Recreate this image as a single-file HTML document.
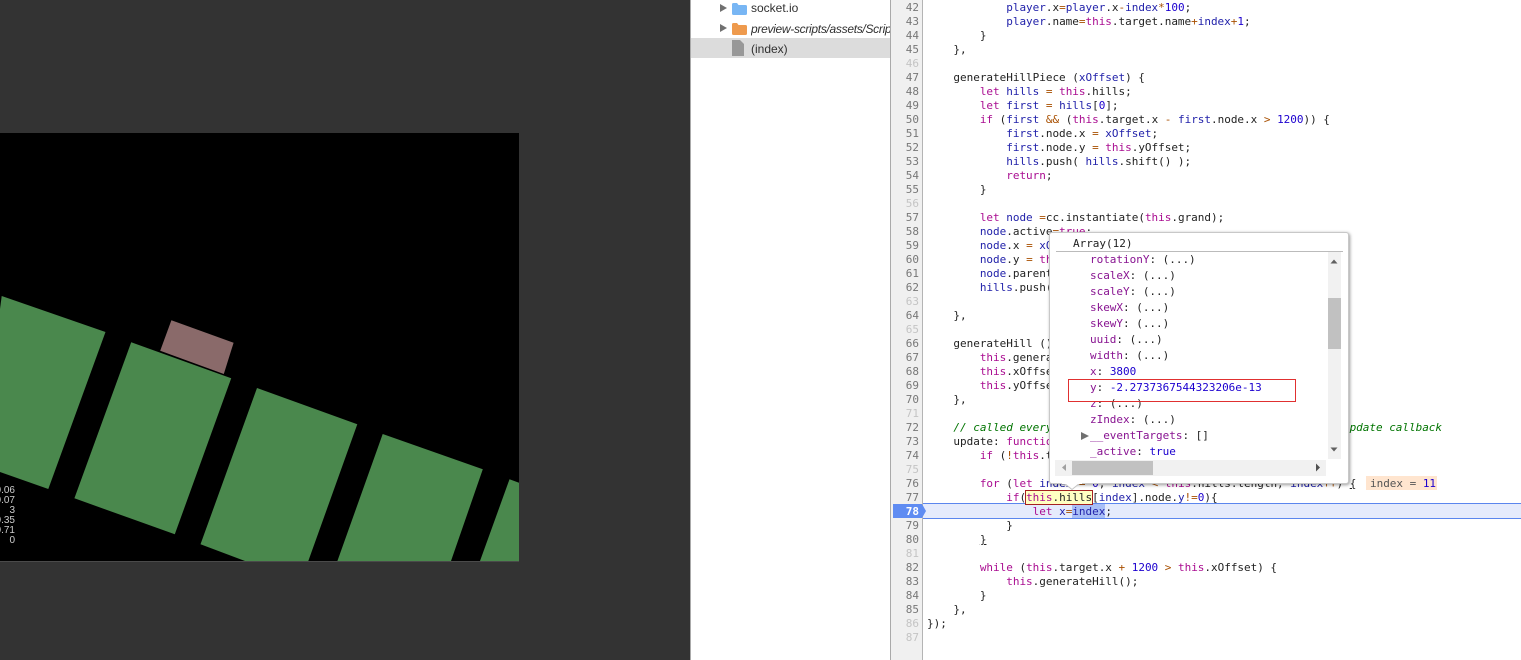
<!DOCTYPE html>
<html><head><meta charset="utf-8"><style>
html,body{margin:0;padding:0;width:1521px;height:660px;overflow:hidden;background:#fff}
*{box-sizing:border-box}
.a{position:absolute}
.l{position:absolute;left:927px;height:14px;margin-top:1px;white-space:pre;font:11px/14px "DejaVu Sans Mono","Liberation Mono",monospace;letter-spacing:-.02px;color:#222}
.g{position:absolute;left:891px;width:28px;margin-top:1px;text-align:right;height:14px;font:11px/14px "DejaVu Sans Mono","Liberation Mono",monospace;letter-spacing:-.02px;color:#777}
.d{color:#c4c4c4}
.l b,.r b{font-weight:normal;color:#aa0d91}
.l i{font-style:normal;color:#2222aa}
.l s{text-decoration:none;color:#a84f00}
.l u{text-decoration:none;color:#1c00cf}
.l em{font-style:italic;color:#007400}
.m{text-decoration:underline}
.s{position:absolute;left:751px;font:12px/16px "Liberation Sans",sans-serif;color:#303030;white-space:nowrap}
.r{position:absolute;left:1090px;height:16px;margin-top:1px;font:11px/16px "DejaVu Sans Mono","Liberation Mono",monospace;letter-spacing:-.02px;color:#222;white-space:pre}
.r b{color:#881391}.r u{text-decoration:none;color:#1c00cf}
.t{position:absolute;right:1506px;width:40px;text-align:right;font:10px/10px "Liberation Sans",sans-serif;color:#ccc}
</style></head><body>
<div class="a" style="left:0;top:0;width:690px;height:660px;background:#333"></div>
<svg class="a" style="left:0;top:0" width="690" height="660">
<rect x="0" y="133" width="519" height="428" fill="#000"/>
<rect x="0" y="561" width="519" height="1" fill="#4a4a4a"/>
<g fill="#4a884d">
<polygon points="1.7,296 105.5,332 48.3,489 0,472 0,309"/>
<polygon points="131.2,342.3 231.2,378.3 174.8,534.3 74.4,498.3"/>
<polygon points="257,388 357.3,424.3 308.3,561 245,561 200.5,544.3"/>
<polygon points="382.7,434 482.8,469.3 451,561 337.4,561"/>
<polygon points="509.5,479.3 519,482.7 519,561 480,561"/>
</g>
<polygon points="171.4,320.3 233.6,342.7 223.8,374 160.2,350.7" fill="#8a6a6a"/>
</svg>
<div class="t" style="top:486px">0.06</div>
<div class="t" style="top:496px">0.07</div>
<div class="t" style="top:506px">3</div>
<div class="t" style="top:516px">0.35</div>
<div class="t" style="top:526px">0.71</div>
<div class="t" style="top:536px">0</div>

<div class="a" style="left:690px;top:0;width:1px;height:660px;background:#aaa"></div>
<div class="a" style="left:691px;top:38px;width:199px;height:20px;background:#dcdcdc"></div>
<svg class="a" style="left:691px;top:0" width="199" height="60">
<polygon points="29,4 36,8 29,12" fill="#707070"/>
<polygon points="29,24 36,28 29,32" fill="#707070"/>
<path d="M41 4.500q0-1.500 1.500-1.500h3.500l1.500 2h7q1.500 0 1.500 1.500v7q0 1.500-1.500 1.500h-12q-1.500 0-1.500-1.500z" fill="#78b6f4"/>
<path d="M41 24.500q0-1.500 1.500-1.500h3.500l1.500 2h7q1.500 0 1.500 1.500v7q0 1.500-1.500 1.500h-12q-1.500 0-1.500-1.500z" fill="#ee9a4d"/>
<path d="M41 40h8l4 4v12h-12z" fill="#989898"/>
</svg>
<div class="s" style="top:0">socket.io</div>
<div class="s" style="top:21px;font-style:italic;width:139px;overflow:hidden;letter-spacing:-.3px">preview-scripts/assets/Scripts</div>
<div class="s" style="top:41px">(index)</div>

<div class="a" style="left:890px;top:0;width:1px;height:660px;background:#aaa"></div>
<div class="a" style="left:891px;top:0;width:31px;height:660px;background:#f0f0f0"></div>
<div class="a" style="left:922px;top:0;width:1px;height:660px;background:#b4b4b4"></div>

<div class="a" style="left:923px;top:503px;width:598px;height:16px;background:#e5ebfc;border-top:1px solid #5b86ee;border-bottom:1px solid #5b86ee"></div>
<svg class="a" style="left:893px;top:504px" width="34" height="14"><polygon points="0,0 29,0 33,7 29,14 0,14" fill="#5f8cf2"/></svg>
<div class="a" style="left:1072px;top:504px;width:33px;height:14px;background:#a9bff6"></div>
<div class="a" style="left:1366px;top:476px;width:71px;height:14px;background:#ffe5cf"></div>
<div class="a" style="left:1025px;top:490px;width:68px;height:15px;background:#ffffc2;border:1px solid #a52020"></div>

<div class="g" style="top:0">42</div><div class="g" style="top:14px">43</div><div class="g" style="top:28px">44</div><div class="g" style="top:42px">45</div><div class="g d" style="top:56px">46</div><div class="g" style="top:70px">47</div><div class="g" style="top:84px">48</div><div class="g" style="top:98px">49</div><div class="g" style="top:112px">50</div><div class="g" style="top:126px">51</div><div class="g" style="top:140px">52</div><div class="g" style="top:154px">53</div><div class="g" style="top:168px">54</div><div class="g" style="top:182px">55</div><div class="g d" style="top:196px">56</div><div class="g" style="top:210px">57</div><div class="g" style="top:224px">58</div><div class="g" style="top:238px">59</div><div class="g" style="top:252px">60</div><div class="g" style="top:266px">61</div><div class="g" style="top:280px">62</div><div class="g d" style="top:294px">63</div><div class="g" style="top:308px">64</div><div class="g d" style="top:322px">65</div><div class="g" style="top:336px">66</div><div class="g" style="top:350px">67</div><div class="g" style="top:364px">68</div><div class="g" style="top:378px">69</div><div class="g" style="top:392px">70</div><div class="g d" style="top:406px">71</div><div class="g" style="top:420px">72</div><div class="g" style="top:434px">73</div><div class="g" style="top:448px">74</div><div class="g d" style="top:462px">75</div><div class="g" style="top:476px">76</div><div class="g" style="top:490px">77</div><div class="g" style="top:504px;color:#fff;font-weight:bold">78</div><div class="g" style="top:518px">79</div><div class="g" style="top:532px">80</div><div class="g d" style="top:546px">81</div><div class="g" style="top:560px">82</div><div class="g" style="top:574px">83</div><div class="g" style="top:588px">84</div><div class="g" style="top:602px">85</div><div class="g d" style="top:616px">86</div><div class="g d" style="top:630px">87</div>

<div class="l" style="top:0">            <i>player</i>.x<s>=</s><i>player</i>.x<s>-</s><i>index</i><s>*</s><u>100</u>;</div>
<div class="l" style="top:14px">            <i>player</i>.name<s>=</s><b>this</b>.target.name<s>+</s><i>index</i><s>+</s><u>1</u>;</div>
<div class="l" style="top:28px">        }</div>
<div class="l" style="top:42px">    },</div>
<div class="l" style="top:70px">    generateHillPiece (<i>xOffset</i>) {</div>
<div class="l" style="top:84px">        <b>let</b> <i>hills</i> <s>=</s> <b>this</b>.hills;</div>
<div class="l" style="top:98px">        <b>let</b> <i>first</i> <s>=</s> <i>hills</i>[<u>0</u>];</div>
<div class="l" style="top:112px">        <b>if</b> (<i>first</i> <s>&amp;&amp;</s> (<b>this</b>.target.x <s>-</s> <i>first</i>.node.x <s>&gt;</s> <u>1200</u>)) {</div>
<div class="l" style="top:126px">            <i>first</i>.node.x <s>=</s> <i>xOffset</i>;</div>
<div class="l" style="top:140px">            <i>first</i>.node.y <s>=</s> <b>this</b>.yOffset;</div>
<div class="l" style="top:154px">            <i>hills</i>.push( <i>hills</i>.shift() );</div>
<div class="l" style="top:168px">            <b>return</b>;</div>
<div class="l" style="top:182px">        }</div>
<div class="l" style="top:210px">        <b>let</b> <i>node</i> <s>=</s>cc.instantiate(<b>this</b>.grand);</div>
<div class="l" style="top:224px">        <i>node</i>.active<s>=</s><b>true</b>;</div>
<div class="l" style="top:238px">        <i>node</i>.x <s>=</s> <i>xOffset</i>;</div>
<div class="l" style="top:252px">        <i>node</i>.y <s>=</s> <b>this</b>.yOffset;</div>
<div class="l" style="top:266px">        <i>node</i>.parent <s>=</s> <b>this</b>.node;</div>
<div class="l" style="top:280px">        <i>hills</i>.push(<i>node</i>);</div>
<div class="l" style="top:308px">    },</div>
<div class="l" style="top:336px">    generateHill () {</div>
<div class="l" style="top:350px">        <b>this</b>.generateHillPiece(<b>this</b>.xOffset);</div>
<div class="l" style="top:364px">        <b>this</b>.xOffset <s>+=</s> <b>this</b>.width;</div>
<div class="l" style="top:378px">        <b>this</b>.yOffset <s>-=</s> <b>this</b>.height;</div>
<div class="l" style="top:392px">    },</div>
<div class="l" style="top:420px">    <em>// called every frame, uncomment this function to activate update callback</em></div>
<div class="l" style="top:434px">    update: <b>function</b> (<i>dt</i>) {</div>
<div class="l" style="top:448px">        <b>if</b> (<s>!</s><b>this</b>.target) <b>return</b>;</div>
<div class="l" style="top:476px">        <b>for</b> (<b>let</b> <i>index</i> <s>=</s> <u>0</u>; <i>index</i> <s>&lt;</s> <b>this</b>.hills.length; <i>index</i><s>++</s>) <span class="m">{</span></div>
<div class="l" style="top:476px;left:1370px;color:#555">index = <u>11</u></div>
<div class="l" style="top:490px">            <b>if</b>(<b>this</b>.hills[<i>index</i>].node.<i>y</i><s>!=</s><u>0</u>){</div>
<div class="l" style="top:504px">                <b>let</b> <i>x</i><s>=</s><i>index</i>;</div>
<div class="l" style="top:518px">            }</div>
<div class="l" style="top:532px">        <span class="m">}</span></div>
<div class="l" style="top:560px">        <b>while</b> (<b>this</b>.target.x <s>+</s> <u>1200</u> <s>&gt;</s> <b>this</b>.xOffset) {</div>
<div class="l" style="top:574px">            <b>this</b>.generateHill();</div>
<div class="l" style="top:588px">        }</div>
<div class="l" style="top:602px">    },</div>
<div class="l" style="top:616px">});</div>

<div class="a" style="left:1049px;top:232px;width:300px;height:252px;background:#fff;border:1px solid #c8c8c8;border-radius:3px;box-shadow:1px 1px 3px rgba(0,0,0,.4)"></div>
<svg class="a" style="left:1062px;top:482px" width="20" height="9"><polygon points="2,1 10,7.500 18,1" fill="#fff" stroke="#c4c4c4"/><rect x="0" y="0" width="20" height="2" fill="#fff"/></svg>
<div class="r" style="left:1073px;top:235px">Array(12)</div>
<div class="a" style="left:1056px;top:251px;width:287px;height:1px;background:#bbb"></div>
<div class="a" style="left:1055px;top:252px;width:288px;height:207px;overflow:hidden">
<div class="r" style="left:35px;top:-1px"><b>rotationY</b>: (...)</div>
<div class="r" style="left:35px;top:15px"><b>scaleX</b>: (...)</div>
<div class="r" style="left:35px;top:31px"><b>scaleY</b>: (...)</div>
<div class="r" style="left:35px;top:47px"><b>skewX</b>: (...)</div>
<div class="r" style="left:35px;top:63px"><b>skewY</b>: (...)</div>
<div class="r" style="left:35px;top:79px"><b>uuid</b>: (...)</div>
<div class="r" style="left:35px;top:95px"><b>width</b>: (...)</div>
<div class="r" style="left:35px;top:111px"><b>x</b>: <u>3800</u></div>
<div class="r" style="left:35px;top:127px"><b>y</b>: <u>-2.2737367544323206e-13</u></div>
<div class="r" style="left:35px;top:143px"><b>z</b>: (...)</div>
<div class="r" style="left:35px;top:159px"><b>zIndex</b>: (...)</div>
<div class="r" style="left:35px;top:175px"><b>__eventTargets</b>: []</div>
<div class="r" style="left:35px;top:191px"><b>_active</b>: <u>true</u></div>
<svg class="a" style="left:26px;top:179px" width="10" height="10"><polygon points="0,1 8,5 0,9" fill="#707070"/></svg>
</div>
<div class="a" style="left:1068px;top:379px;width:228px;height:23px;border:1px solid #e03030"></div>
<div class="a" style="left:1328px;top:252px;width:13px;height:207px;background:#f1f1f1"></div>
<div class="a" style="left:1328px;top:298px;width:13px;height:51px;background:#c1c1c1"></div>
<div class="a" style="left:1055px;top:460px;width:271px;height:16px;background:#f1f1f1"></div>
<div class="a" style="left:1072px;top:461px;width:81px;height:14px;background:#c1c1c1"></div>
<svg class="a" style="left:1055px;top:252px" width="288" height="224">
<polygon points="275.500,11.500 282.500,11.500 279,7.500" fill="#606060"/>
<polygon points="275.500,195.500 282.500,195.500 279,199.500" fill="#606060"/>
<polygon points="11,212 7,215.500 11,219" fill="#a0a0a0"/>
<polygon points="261,211.500 265,215.500 261,219.500" fill="#505050"/>
</svg>
</body></html>
